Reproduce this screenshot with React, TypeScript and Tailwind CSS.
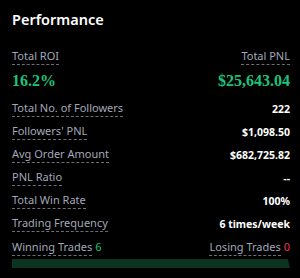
import React from "react";

const rows: { label: string; value: string }[] = [
  { label: "Total No. of Followers", value: "222" },
  { label: "Followers' PNL", value: "$1,098.50" },
  { label: "Avg Order Amount", value: "$682,725.82" },
  { label: "PNL Ratio", value: "--" },
  { label: "Total Win Rate", value: "100%" },
  { label: "Trading Frequency", value: "6 times/week" },
];

function Label({ children }: { children: React.ReactNode }) {
  return (
    <span className="border-b border-dashed border-[#6b6f7a] pb-[1px] text-[#a3a8b8] leading-[14px]">
      {children}
    </span>
  );
}

export default function App() {
  return (
    <div
      className="w-[300px] h-[278px] bg-black text-white pl-3 pr-[10px] pt-[9px]"
      style={{ fontFamily: '"Noto Sans", "Open Sans", sans-serif' }}
    >
      <div className="text-[14.5px] font-semibold leading-[20px]">Performance</div>
      <div className="mt-[20px] flex justify-between text-[11px] leading-[16px]">
        <Label>Total ROI</Label>
        <Label>Total PNL</Label>
      </div>
      <div
        className="mt-[7px] flex justify-between text-[16px] font-bold text-[#1dc27c] leading-[18px]"
        style={{ fontFamily: '"Liberation Serif", serif' }}
      >
        <span>16.2%</span>
        <span>$25,643.04</span>
      </div>
      <div className="mt-[7px] flex flex-col text-[11px] leading-[16px]">
        {rows.map((r) => (
          <div key={r.label} className="flex justify-between items-center h-[23px]">
            <Label>{r.label}</Label>
            <span className="font-bold text-white text-[10.5px]">{r.value}</span>
          </div>
        ))}
        <div className="flex justify-between items-center h-[23px]">
          <span>
            <Label>Winning Trades</Label>
            <span className="ml-[3px] text-[#1dc27c]">6</span>
          </span>
          <span>
            <Label>Losing Trades</Label>
            <span className="ml-[3px] text-[#f0354b]">0</span>
          </span>
        </div>
      </div>
      <div
        className="mt-[1px] h-[9px] bg-[#0a3322]"
        style={{ clipPath: "polygon(0 0, calc(100% - 2px) 0, 100% 100%, 0 100%)" }}
      />
    </div>
  );
}
